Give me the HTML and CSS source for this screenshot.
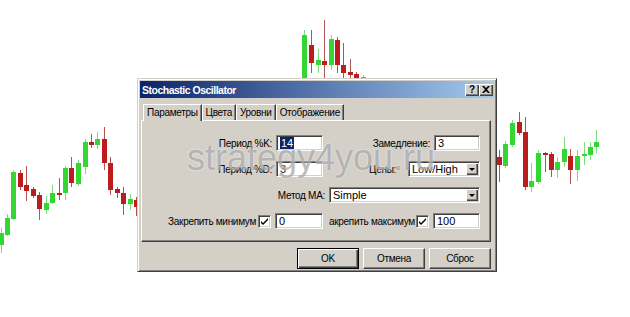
FILE: index.html
```html
<!DOCTYPE html>
<html lang="ru">
<head>
  <meta charset="UTF-8">
  <title>Stochastic Oscillator</title>
  <link rel="stylesheet" href="styles.css">
</head>
<body>
  <div class="screen">
    <svg id="chart" class="chart" width="630" height="317"></svg>

    <div class="dialog">
      <div class="titlebar">
        <span class="title">Stochastic Oscillator</span>
        <span class="caption-btns">
          <span class="cbtn">?</span>
          <span class="cbtn">
            <svg width="8" height="7" viewBox="0 0 8 7"><path d="M0 0h2l2 2 2-2h2L5 3.5 8 7H6L4 5 2 7H0l3-3.5z" fill="#000"/></svg>
          </span>
        </span>
      </div>

      <div class="tabs">
        <span class="tab active">Параметры</span>
        <span class="tab">Цвета</span>
        <span class="tab">Уровни</span>
        <span class="tab">Отображение</span>
      </div>

      <div class="panel">
        <div class="row">
          <label class="lbl lbl-a">Период %K:</label>
          <span class="field w47"><span class="sel-text">14</span></span>
          <label class="lbl lbl-b">Замедление:</label>
          <span class="field w46">3</span>
        </div>
        <div class="row">
          <label class="lbl lbl-a">Период %D:</label>
          <span class="field w47">3</span>
          <label class="lbl lbl-c">Цены:</label>
          <span class="field combo w72">Low/High<span class="drop"></span></span>
        </div>
        <div class="row">
          <label class="lbl lbl-d">Метод MA:</label>
          <span class="field combo w151">Simple<span class="drop"></span></span>
        </div>
        <div class="row">
          <label class="lbl lbl-e">Закрепить минимум</label>
          <span class="check"><svg width="9" height="9" viewBox="0 0 9 9"><path d="M1 4l2 2 5-5v2L3 8 1 6z" fill="#000"/></svg></span>
          <span class="field w48">0</span>
          <label class="lbl lbl-f">акрепить максимум</label>
          <span class="check"><svg width="9" height="9" viewBox="0 0 9 9"><path d="M1 4l2 2 5-5v2L3 8 1 6z" fill="#000"/></svg></span>
          <span class="field w47">100</span>
        </div>
      </div>

      <div class="buttons">
        <button class="btn default">OK</button>
        <button class="btn">Отмена</button>
        <button class="btn">Сброс</button>
      </div>

      <div class="watermark">strategy4you.ru</div>
    </div>
  </div>

  <script>
    // x, body top, body bottom, wick top, wick bottom, up/down
    const candles = [
      [-1,233,245,228,253,1], [5,218,235,214,236,1], [11,172,219,170,220,1],
      [18,173,187,170,190,0], [24,185,191,166,201,0], [31,189,196,187,198,0],
      [37,195,209,192,220,0], [44,203,210,196,214,1], [50,193,203,185,204,1],
      [57,193,195,178,200,0], [63,168,193,166,200,1], [69,168,183,157,187,0],
      [76,163,184,160,186,1], [83,142,167,139,174,1], [89,142,145,134,148,0],
      [95,139,145,132,149,1], [102,139,163,127,170,0], [108,163,190,157,195,0],
      [115,189,193,187,198,0], [121,193,204,187,215,0], [128,199,204,194,210,1],
      [134,200,207,197,216,0],

      [302,35,82,30,82,1], [309,45,63,30,73,0], [316,60,65,49,73,1],
      [322,61,65,20,80,0], [329,39,65,35,70,1], [335,40,65,37,73,0],
      [341,65,73,43,80,0], [348,72,75,59,80,0], [354,74,79,72,80,0],
      [361,77,79,75,80,1], [368,78,79,78,80,0],

      [497,157,165,150,182,0], [503,144,166,141,168,1], [510,123,145,120,147,1],
      [517,122,133,112,135,0], [523,132,187,117,190,0], [529,181,187,163,192,1],
      [536,153,182,150,184,1], [543,153,155,152,172,0], [549,154,170,152,177,0],
      [555,162,170,157,178,1], [562,149,162,137,167,1], [568,156,170,149,184,0],
      [575,156,170,150,181,1], [582,154,156,142,165,1], [588,147,155,142,160,1],
      [594,142,147,130,153,1]
    ];

    const svg = document.getElementById('chart');
    const ns = 'http://www.w3.org/2000/svg';

    function rect(x, y, w, h, fill) {
      const r = document.createElementNS(ns, 'rect');
      r.setAttribute('x', x);
      r.setAttribute('y', y);
      r.setAttribute('width', w);
      r.setAttribute('height', h);
      r.setAttribute('fill', fill);
      svg.appendChild(r);
    }

    candles.forEach(c => {
      const [x, bt, bb, wt, wb, up] = c;
      rect(x + 2, wt, 1, wb - wt, up ? '#80dc80' : '#b05454');
      rect(x, bt, 5, Math.max(bb - bt, 1), up ? '#33d633' : '#bd1c1c');
    });
  </script>
</body>
</html>
```

FILE: styles.css
```css
body { margin: 0; background: #fff; font-family: "Liberation Sans", Arial, sans-serif; font-size: 10px; letter-spacing: -0.3px; color: #000; }
.screen { position: relative; width: 630px; height: 317px; overflow: hidden; }
.chart { display: block; }

.dialog { position: absolute; left: 137px; top: 78px; width: 360px; box-sizing: border-box; padding: 2px; background: #d4d0c8; border: 1px solid; border-color: #d4d0c8 #404040 #404040 #d4d0c8; box-shadow: inset 1px 1px #fff, inset -1px -1px #808080; }

.titlebar { height: 17px; display: flex; align-items: center; justify-content: space-between; padding: 0 1px 0 2px; background: linear-gradient(to right, #0a246a, #a6caf0); color: #fff; }
.title { font-weight: bold; font-size: 10.5px; letter-spacing: -0.5px; }
.caption-btns { display: flex; }
.cbtn { width: 14px; height: 12px; box-sizing: border-box; display: flex; align-items: center; justify-content: center; background: #d4d0c8; color: #000; font-weight: bold; font-size: 10px; letter-spacing: 0; box-shadow: inset 1px 1px #fff, inset -1px -1px #404040, inset -2px -2px #808080; }

.tabs { display: flex; margin-top: 6px; padding-left: 3px; height: 16px; }
.tab { height: 16px; box-sizing: border-box; padding: 0 3px; line-height: 15px; border-top: 1px solid #fff; border-left: 1px solid #fff; border-right: 1px solid #404040; box-shadow: inset -1px 0 #808080; }
.tab.active { position: relative; z-index: 1; height: 17px; background: #d4d0c8; }

.panel { width: 350px; height: 122px; box-sizing: border-box; margin-left: 1px; padding-top: 14px; border: 1px solid; border-color: #fff #404040 #404040 #fff; box-shadow: inset -1px -1px #808080; display: flex; flex-direction: column; gap: 10px; }
.row { display: flex; align-items: center; height: 16px; }
.lbl { text-align: right; white-space: nowrap; }
.lbl-a { width: 130px; margin-right: 4px; }
.lbl-b { width: 107px; margin-right: 4px; }
.lbl-c { width: 73px; margin-right: 12px; }
.lbl-d { width: 183px; margin-right: 4px; }
.lbl-e { width: 114px; margin-right: 2px; }
.lbl-f { width: 84px; margin-right: 3px; text-align: left; }

.field { position: relative; height: 16px; box-sizing: border-box; padding-left: 3px; line-height: 14px; font-size: 11px; letter-spacing: 0; background: #fff; border: 1px solid; border-color: #808080 #fff #fff #808080; box-shadow: inset 1px 1px #404040, inset -1px -1px #d4d0c8; white-space: nowrap; }
.w46 { width: 46px; }
.w47 { width: 47px; }
.w48 { width: 48px; margin-right: 6px; }
.w72 { width: 72px; }
.w151 { width: 151px; }
.sel-text { background: #0a246a; color: #fff; padding: 0 1px; }

.combo .drop { position: absolute; right: 1px; top: 1px; width: 12px; height: 12px; box-sizing: border-box; background: #d4d0c8; box-shadow: inset 1px 1px #fff, inset -1px -1px #404040, inset -2px -2px #808080; }
.combo .drop::after { content: ""; position: absolute; left: 3px; top: 5px; border-left: 3px solid transparent; border-right: 3px solid transparent; border-top: 3px solid #000; }

.check { width: 13px; height: 13px; box-sizing: border-box; margin-right: 4px; display: flex; align-items: center; justify-content: center; background: #fff; border: 1px solid; border-color: #808080 #fff #fff #808080; box-shadow: inset 1px 1px #404040, inset -1px -1px #d4d0c8; }

.buttons { display: flex; justify-content: flex-end; gap: 4px; width: 350px; margin: 6px 0 0 1px; }
.btn { width: 62px; height: 21px; padding: 0; font-family: inherit; font-size: 10px; letter-spacing: -0.3px; color: #000; background: #d4d0c8; border: 1px solid; border-color: #fff #404040 #404040 #fff; box-shadow: inset -1px -1px #808080; }
.btn.default { border-color: #000; box-shadow: inset 1px 1px #fff, inset -1px -1px #404040, inset -2px -2px #808080; }

.watermark { position: absolute; left: 49px; top: 61px; z-index: 2; pointer-events: none; font-size: 36px; line-height: 1; letter-spacing: 0; color: rgba(105, 105, 105, 0.45); text-shadow: 0 0 2px rgba(255, 255, 255, 0.8); white-space: nowrap; }
```
